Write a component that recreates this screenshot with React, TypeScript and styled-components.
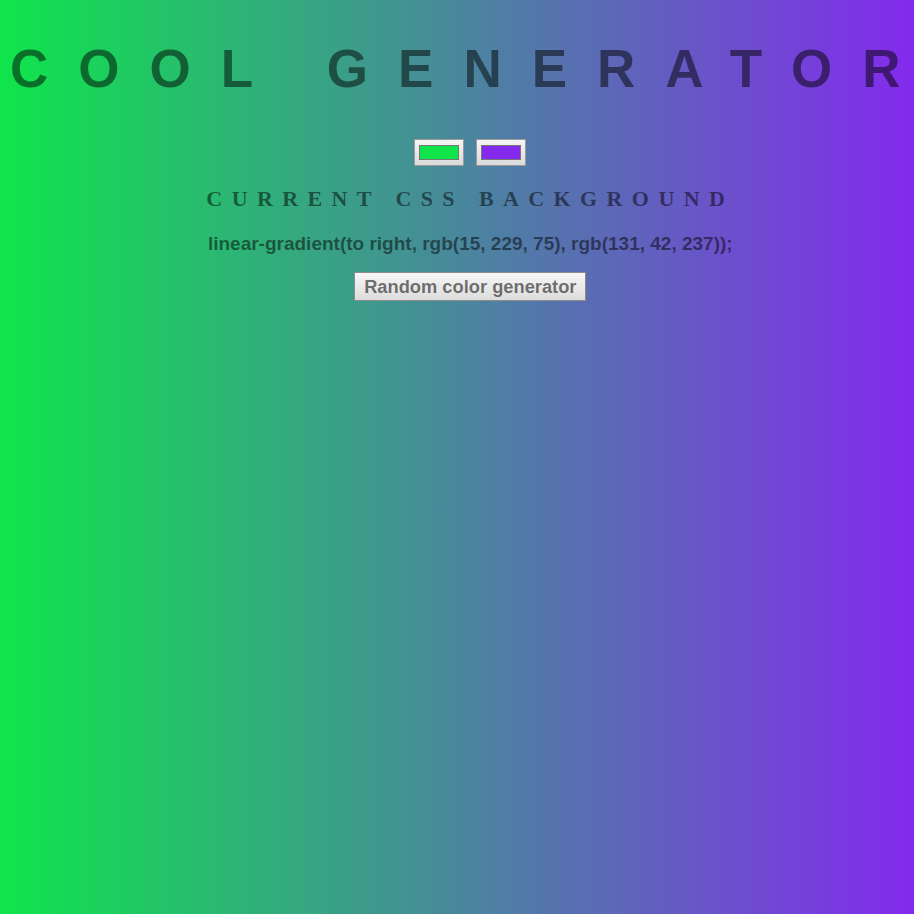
import React from "react";
import styled, { createGlobalStyle } from "styled-components";

const Global = createGlobalStyle`
  html {
    height: 100%;
    overflow: hidden;
    background: linear-gradient(to right, rgb(15, 229, 75), rgb(131, 42, 237));
  }
  body {
    margin: 0;
    font-family: "Liberation Sans", Arial, sans-serif;
    color: rgba(0, 0, 0, 0.5);
  }
`;

const Page = styled.main`
  display: flex;
  flex-direction: column;
  align-items: center;
  width: max-content;
  padding: 0 8px 0 10px;
`;

const Title = styled.h1`
  font-family: "Liberation Sans", Arial, sans-serif;
  font-size: 53px;
  line-height: 61px;
  font-weight: bold;
  letter-spacing: 30px;
  margin: 38px 0 0;
  white-space: nowrap;
`;

const Pickers = styled.div`
  display: flex;
  gap: 12px;
  margin-top: 40px;
`;

const ColorInput = styled.input`
  width: 50px;
  height: 27px;
  margin: 0;
  box-sizing: border-box;
  border: 1px solid #9a9a9a;
  background: linear-gradient(#f5f5f5, #dadada);
  &::-webkit-color-swatch {
    border: 1px solid #777;
  }
`;

const Subtitle = styled.h3`
  font-family: "Liberation Serif", "Times New Roman", serif;
  font-size: 22px;
  line-height: 26px;
  font-weight: bold;
  letter-spacing: 9.4px;
  margin: 20px 0 0;
`;

const Code = styled.h3`
  font-family: "Liberation Sans", Arial, sans-serif;
  font-size: 19px;
  line-height: 22px;
  font-weight: bold;
  margin: 21px 0 0;
`;

const Button = styled.button`
  font-family: "Liberation Sans", Arial, sans-serif;
  font-size: 18.3px;
  line-height: 21px;
  font-weight: bold;
  margin-top: 17px;
  padding: 3px 9px;
  border: 1px solid #8c8c8c;
  border-radius: 0;
  background: linear-gradient(#f7f7f7, #dcdcdc);
  color: rgba(0, 0, 0, 0.55);
`;

export default function App() {
  return (
    <>
      <Global />
      <Page>
        <Title>COOL GENERATOR</Title>
        <Pickers>
          <ColorInput type="color" defaultValue="#0fe54b" />
          <ColorInput type="color" defaultValue="#832aed" />
        </Pickers>
        <Subtitle>CURRENT CSS BACKGROUND</Subtitle>
        <Code>linear-gradient(to right, rgb(15, 229, 75), rgb(131, 42, 237));</Code>
        <Button>Random color generator</Button>
      </Page>
    </>
  );
}
